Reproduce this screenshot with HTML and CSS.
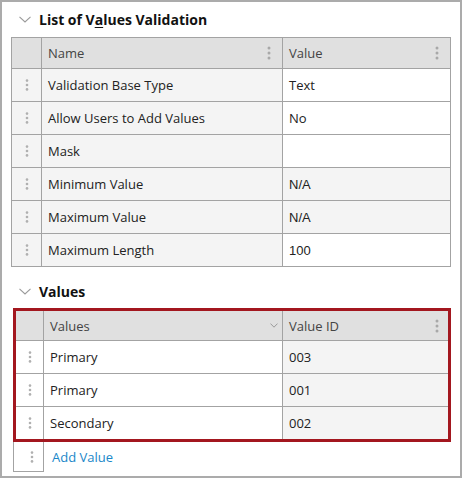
FILE: index.html
```html
<!DOCTYPE html>
<html>
<head>
<meta charset="utf-8">
<link rel="stylesheet" href="styles.css">
</head>
<body>
<div class="panel">
  <div class="section-head first">
    <svg class="chev" width="12" height="7" viewBox="0 0 12 7"><polyline points="0.5,0.8 6,6 11.5,0.8" fill="none" stroke="#9a9a9a" stroke-width="1.1"/></svg>
    <span class="section-title">List of V<u>a</u>lues Validation</span>
  </div>
  <div class="grid g1">
    <div class="row head">
      <div class="cell drag"></div>
      <div class="cell name hcell"><span>Name</span><svg class="kebab" width="4" height="14" viewBox="0 0 4 14"><circle cx="2" cy="2" r="1.5"/><circle cx="2" cy="7" r="1.5"/><circle cx="2" cy="12" r="1.5"/></svg></div>
      <div class="cell val hcell"><span>Value</span><svg class="kebab" width="4" height="14" viewBox="0 0 4 14"><circle cx="2" cy="2" r="1.5"/><circle cx="2" cy="7" r="1.5"/><circle cx="2" cy="12" r="1.5"/></svg></div>
    </div>
    <div class="row">
      <div class="cell drag grey"><svg class="handle" width="4" height="12" viewBox="0 0 4 12"><circle cx="2" cy="1.6" r="1.3"/><circle cx="2" cy="6" r="1.3"/><circle cx="2" cy="10.4" r="1.3"/></svg></div>
      <div class="cell name grey">Validation Base Type</div>
      <div class="cell val">Text</div>
    </div>
    <div class="row">
      <div class="cell drag grey"><svg class="handle" width="4" height="12" viewBox="0 0 4 12"><circle cx="2" cy="1.6" r="1.3"/><circle cx="2" cy="6" r="1.3"/><circle cx="2" cy="10.4" r="1.3"/></svg></div>
      <div class="cell name grey">Allow Users to Add Values</div>
      <div class="cell val">No</div>
    </div>
    <div class="row">
      <div class="cell drag grey"><svg class="handle" width="4" height="12" viewBox="0 0 4 12"><circle cx="2" cy="1.6" r="1.3"/><circle cx="2" cy="6" r="1.3"/><circle cx="2" cy="10.4" r="1.3"/></svg></div>
      <div class="cell name grey">Mask</div>
      <div class="cell val"></div>
    </div>
    <div class="row">
      <div class="cell drag grey"><svg class="handle" width="4" height="12" viewBox="0 0 4 12"><circle cx="2" cy="1.6" r="1.3"/><circle cx="2" cy="6" r="1.3"/><circle cx="2" cy="10.4" r="1.3"/></svg></div>
      <div class="cell name grey">Minimum Value</div>
      <div class="cell val grey arial">N/A</div>
    </div>
    <div class="row">
      <div class="cell drag grey"><svg class="handle" width="4" height="12" viewBox="0 0 4 12"><circle cx="2" cy="1.6" r="1.3"/><circle cx="2" cy="6" r="1.3"/><circle cx="2" cy="10.4" r="1.3"/></svg></div>
      <div class="cell name grey">Maximum Value</div>
      <div class="cell val grey arial">N/A</div>
    </div>
    <div class="row">
      <div class="cell drag grey"><svg class="handle" width="4" height="12" viewBox="0 0 4 12"><circle cx="2" cy="1.6" r="1.3"/><circle cx="2" cy="6" r="1.3"/><circle cx="2" cy="10.4" r="1.3"/></svg></div>
      <div class="cell name grey">Maximum Length</div>
      <div class="cell val arial">100</div>
    </div>
  </div>

  <div class="section-head second">
    <svg class="chev" width="12" height="7" viewBox="0 0 12 7"><polyline points="0.5,0.8 6,6 11.5,0.8" fill="none" stroke="#9a9a9a" stroke-width="1.1"/></svg>
    <span class="section-title">Values</span>
  </div>
  <div class="values-wrap">
    <div class="grid g2">
      <div class="row head">
        <div class="cell drag"></div>
        <div class="cell name hcell"><span>Values</span><svg class="sortchev" width="8" height="5" viewBox="0 0 8 5"><polyline points="0.5,0.6 4,4.2 7.5,0.6" fill="none" stroke="#999" stroke-width="1"/></svg></div>
        <div class="cell val hcell"><span>Value ID</span><svg class="kebab" width="4" height="14" viewBox="0 0 4 14"><circle cx="2" cy="2" r="1.5"/><circle cx="2" cy="7" r="1.5"/><circle cx="2" cy="12" r="1.5"/></svg></div>
      </div>
      <div class="row">
        <div class="cell drag"><svg class="handle" width="4" height="12" viewBox="0 0 4 12"><circle cx="2" cy="1.6" r="1.3"/><circle cx="2" cy="6" r="1.3"/><circle cx="2" cy="10.4" r="1.3"/></svg></div>
        <div class="cell name">Primary</div>
        <div class="cell val grey">003</div>
      </div>
      <div class="row">
        <div class="cell drag"><svg class="handle" width="4" height="12" viewBox="0 0 4 12"><circle cx="2" cy="1.6" r="1.3"/><circle cx="2" cy="6" r="1.3"/><circle cx="2" cy="10.4" r="1.3"/></svg></div>
        <div class="cell name">Primary</div>
        <div class="cell val grey">001</div>
      </div>
      <div class="row last">
        <div class="cell drag"><svg class="handle" width="4" height="12" viewBox="0 0 4 12"><circle cx="2" cy="1.6" r="1.3"/><circle cx="2" cy="6" r="1.3"/><circle cx="2" cy="10.4" r="1.3"/></svg></div>
        <div class="cell name">Secondary</div>
        <div class="cell val grey">002</div>
      </div>
    </div>
    <div class="add-row">
      <div class="add-drag"><svg class="handle" width="4" height="12" viewBox="0 0 4 12"><circle cx="2" cy="1.6" r="1.3"/><circle cx="2" cy="6" r="1.3"/><circle cx="2" cy="10.4" r="1.3"/></svg></div>
      <a class="add-link" href="#">Add Value</a>
    </div>
  </div>
</div>
</body>
</html>
```

FILE: styles.css
```css
html, body {
  margin: 0;
  padding: 0;
  background: #fff;
}
body {
  font-family: "Open Sans", "Noto Sans", sans-serif;
  font-size: 13px;
  color: #222;
}
.panel {
  box-sizing: border-box;
  width: 462px;
  height: 478px;
  border: 2px solid #ababab;
  padding: 0 9px;
}
.section-head {
  display: flex;
  align-items: center;
  height: 35px;
  padding-left: 8px;
}
.section-head.second {
  height: 34px;
  margin-top: 7px;
}
.chev {
  margin-right: 8px;
  flex: none;
}
.section-title {
  font-weight: bold;
  font-size: 14px;
  color: #111;
}
.section-title u {
  text-decoration-thickness: 1px;
  text-underline-offset: 2px;
}
.grid {
  display: flex;
  flex-direction: column;
}
.g1 {
  width: 440px;
  border-left: 1px solid #a3a3a3;
  border-top: 1px solid #a3a3a3;
  box-sizing: border-box;
}
.row {
  display: flex;
  height: 33px;
}
.row.head {
  height: 31px;
  background: #e0e0e0;
  color: #444;
}
.cell {
  box-sizing: border-box;
  border-right: 1px solid #a3a3a3;
  border-bottom: 1px solid #a3a3a3;
  display: flex;
  align-items: center;
  padding-left: 6px;
  white-space: nowrap;
}
.cell.drag {
  width: 30px;
  padding-left: 0;
  justify-content: center;
  flex: none;
}
.cell.name {
  width: 241px;
  flex: none;
}
.cell.val {
  width: 168px;
  flex: none;
}
.cell.grey {
  background: #f4f4f4;
}
.cell.arial {
  font-family: "Liberation Sans", Arial, sans-serif;
}
.hcell {
  justify-content: space-between;
  padding-right: 11px;
}
.kebab circle {
  fill: #a8a8a8;
}
.handle circle {
  fill: #b0b0b0;
}
.values-wrap {
  padding-left: 2px;
}
.g2 {
  width: 438px;
  box-sizing: border-box;
  border: 3px solid #a3171f;
}
.g2 .row.head {
  height: 30px;
}
.g2 .cell.drag {
  width: 28px;
}
.g2 .cell.name {
  width: 239px;
}
.g2 .cell.val {
  width: 165px;
  border-right: none;
  padding-right: 9px;
}
.g2 .row.last {
  height: 32px;
}
.g2 .row.last .cell {
  border-bottom: none;
}
.sortchev {
  margin-right: -7px;
}
.add-row {
  display: flex;
  align-items: center;
  height: 30px;
}
.add-drag {
  box-sizing: border-box;
  width: 31px;
  height: 30px;
  border: 1px solid #a3a3a3;
  border-top: none;
  display: flex;
  align-items: center;
  justify-content: center;
  padding-left: 6px;
}
.add-link {
  margin-left: 8px;
  color: #1a87c9;
  text-decoration: none;
}
```
